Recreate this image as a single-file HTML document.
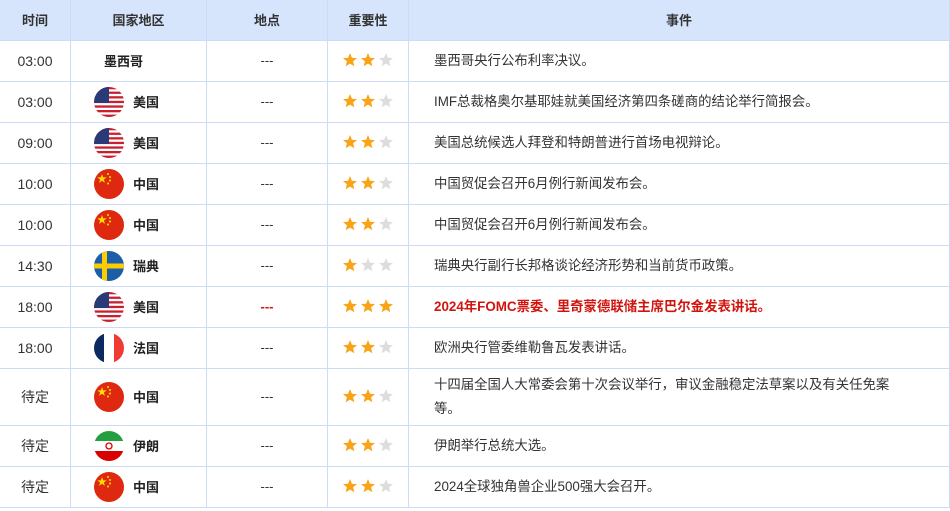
<!DOCTYPE html>
<html><head><meta charset="utf-8">
<style>
*{margin:0;padding:0;box-sizing:border-box}
body{width:950px;height:511px;background:#fff;font-family:"Liberation Sans","Noto Sans CJK SC",sans-serif;font-size:13px;color:#333;overflow:hidden}
table{border-collapse:collapse;table-layout:fixed;width:951px;margin-left:-1px}
td,th{border:1px solid #cddcf6;text-align:center;vertical-align:middle}
th{background:#d6e5fc;height:40px;font-weight:bold;font-size:13px;color:#333;border-top:none}
tr.r td{height:41px}
td.t{font-size:14px}
td.c{text-align:left;padding-left:23px;font-weight:bold;color:#222}
td.c div{display:flex;align-items:center}
td.c .f{display:block;width:30px;height:30px;margin-right:9px;flex:none}
td.e{text-align:left;padding-left:25px;padding-right:40px;line-height:24px;font-size:13.4px}
.st{display:block;margin:0 auto;position:relative;top:-1px}
.red{color:#d0140e;font-weight:bold}
</style></head><body>
<svg width="0" height="0" style="position:absolute">
<defs>
<clipPath id="cc"><circle cx="15" cy="15" r="15"/></clipPath>
<polygon id="star" points="7,0 8.9,4.8 14,5.1 10.1,8.3 11.3,13.3 7,10.6 2.7,13.3 3.9,8.3 0,5.1 5.1,4.8"/>
<g id="us" clip-path="url(#cc)"><rect width="30" height="30" fill="#fff"/><g fill="#c8202f"><rect y="0" width="30" height="2.3"/><rect y="4.6" width="30" height="2.3"/><rect y="9.2" width="30" height="2.3"/><rect y="13.8" width="30" height="2.3"/><rect y="18.4" width="30" height="2.3"/><rect y="23" width="30" height="2.3"/><rect y="27.6" width="30" height="2.4"/></g><rect width="15" height="16" fill="#2a3a76"/></g>
<g id="cn" clip-path="url(#cc)"><rect width="30" height="30" fill="#de2910"/><polygon fill="#ffde00" points="8,5 9.2,8.4 12.7,8.4 9.9,10.5 10.9,13.9 8,11.8 5.1,13.9 6.1,10.5 3.3,8.4 6.8,8.4"/><circle cx="14" cy="5" r="1" fill="#ffde00"/><circle cx="16" cy="8" r="1" fill="#ffde00"/><circle cx="16" cy="11.5" r="1" fill="#ffde00"/><circle cx="14" cy="14.5" r="1" fill="#ffde00"/></g>
<g id="se" clip-path="url(#cc)"><rect width="30" height="30" fill="#1b5fa8"/><rect x="8" width="5" height="30" fill="#fecc02"/><rect y="12.5" width="30" height="5" fill="#fecc02"/></g>
<g id="fr" clip-path="url(#cc)"><rect width="10" height="30" fill="#0b2a61"/><rect x="10" width="10" height="30" fill="#fff"/><rect x="20" width="10" height="30" fill="#ef3b33"/></g>
<g id="ir" clip-path="url(#cc)"><rect width="30" height="10" fill="#239f40"/><rect y="10" width="30" height="10" fill="#fff"/><rect y="20" width="30" height="10" fill="#da0000"/><circle cx="15" cy="15" r="3" fill="none" stroke="#da0000" stroke-width="1.3"/></g>
</defs></svg>
<table>
<colgroup><col style="width:71px"><col style="width:136px"><col style="width:121px"><col style="width:81px"><col></colgroup>
<tr><th>时间</th><th>国家地区</th><th>地点</th><th>重要性</th><th>事件</th></tr>
<tr class="r"><td class="t">03:00</td><td class="c" style="padding-left:33px"><span>墨西哥</span></td><td>---</td><td><svg class="st" width="50" height="14"><use href="#star" fill="#f8a416"/><use href="#star" x="18" fill="#f8a416"/><use href="#star" x="36" fill="#ddd"/></svg></td><td class="e">墨西哥央行公布利率决议。</td></tr>
<tr class="r"><td class="t">03:00</td><td class="c"><div><svg class="f"><use href="#us"/></svg><span>美国</span></div></td><td>---</td><td><svg class="st" width="50" height="14"><use href="#star" fill="#f8a416"/><use href="#star" x="18" fill="#f8a416"/><use href="#star" x="36" fill="#ddd"/></svg></td><td class="e">IMF总裁格奥尔基耶娃就美国经济第四条磋商的结论举行简报会。</td></tr>
<tr class="r"><td class="t">09:00</td><td class="c"><div><svg class="f"><use href="#us"/></svg><span>美国</span></div></td><td>---</td><td><svg class="st" width="50" height="14"><use href="#star" fill="#f8a416"/><use href="#star" x="18" fill="#f8a416"/><use href="#star" x="36" fill="#ddd"/></svg></td><td class="e">美国总统候选人拜登和特朗普进行首场电视辩论。</td></tr>
<tr class="r"><td class="t">10:00</td><td class="c"><div><svg class="f"><use href="#cn"/></svg><span>中国</span></div></td><td>---</td><td><svg class="st" width="50" height="14"><use href="#star" fill="#f8a416"/><use href="#star" x="18" fill="#f8a416"/><use href="#star" x="36" fill="#ddd"/></svg></td><td class="e">中国贸促会召开6月例行新闻发布会。</td></tr>
<tr class="r"><td class="t">10:00</td><td class="c"><div><svg class="f"><use href="#cn"/></svg><span>中国</span></div></td><td>---</td><td><svg class="st" width="50" height="14"><use href="#star" fill="#f8a416"/><use href="#star" x="18" fill="#f8a416"/><use href="#star" x="36" fill="#ddd"/></svg></td><td class="e">中国贸促会召开6月例行新闻发布会。</td></tr>
<tr class="r"><td class="t">14:30</td><td class="c"><div><svg class="f"><use href="#se"/></svg><span>瑞典</span></div></td><td>---</td><td><svg class="st" width="50" height="14"><use href="#star" fill="#f8a416"/><use href="#star" x="18" fill="#ddd"/><use href="#star" x="36" fill="#ddd"/></svg></td><td class="e">瑞典央行副行长邦格谈论经济形势和当前货币政策。</td></tr>
<tr class="r"><td class="t">18:00</td><td class="c"><div><svg class="f"><use href="#us"/></svg><span>美国</span></div></td><td class="red">---</td><td><svg class="st" width="50" height="14"><use href="#star" fill="#f8a416"/><use href="#star" x="18" fill="#f8a416"/><use href="#star" x="36" fill="#f8a416"/></svg></td><td class="e red">2024年FOMC票委、里奇蒙德联储主席巴尔金发表讲话。</td></tr>
<tr class="r"><td class="t">18:00</td><td class="c"><div><svg class="f"><use href="#fr"/></svg><span>法国</span></div></td><td>---</td><td><svg class="st" width="50" height="14"><use href="#star" fill="#f8a416"/><use href="#star" x="18" fill="#f8a416"/><use href="#star" x="36" fill="#ddd"/></svg></td><td class="e">欧洲央行管委维勒鲁瓦发表讲话。</td></tr>
<tr><td class="t" style="height:57px">待定</td><td class="c"><div><svg class="f"><use href="#cn"/></svg><span>中国</span></div></td><td>---</td><td><svg class="st" width="50" height="14"><use href="#star" fill="#f8a416"/><use href="#star" x="18" fill="#f8a416"/><use href="#star" x="36" fill="#ddd"/></svg></td><td class="e">十四届全国人大常委会第十次会议举行，审议金融稳定法草案以及有关任免案等。</td></tr>
<tr class="r"><td class="t">待定</td><td class="c"><div><svg class="f"><use href="#ir"/></svg><span>伊朗</span></div></td><td>---</td><td><svg class="st" width="50" height="14"><use href="#star" fill="#f8a416"/><use href="#star" x="18" fill="#f8a416"/><use href="#star" x="36" fill="#ddd"/></svg></td><td class="e">伊朗举行总统大选。</td></tr>
<tr class="r"><td class="t">待定</td><td class="c"><div><svg class="f"><use href="#cn"/></svg><span>中国</span></div></td><td>---</td><td><svg class="st" width="50" height="14"><use href="#star" fill="#f8a416"/><use href="#star" x="18" fill="#f8a416"/><use href="#star" x="36" fill="#ddd"/></svg></td><td class="e">2024全球独角兽企业500强大会召开。</td></tr>
</table>
</body></html>
